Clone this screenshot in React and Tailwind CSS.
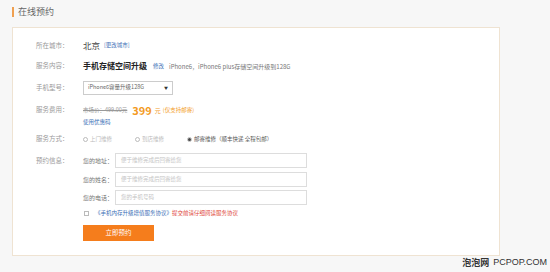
const font = { fontFamily: '"Noto Sans CJK SC", "Liberation Sans", sans-serif' }

const Label = ({ children }) => (
  <div className="w-[47px] shrink-0 text-[6.5px] text-[#9a9a9a]">{children}</div>
)

const Field = ({ label, placeholder }) => (
  <div className="flex items-center h-[15px]">
    <span className="w-[32px] shrink-0 text-[6px] text-[#777]">{label}</span>
    <div className="w-[192px] h-[15px] border border-[#ddd] bg-white flex items-center pl-[5px] text-[5.5px] text-[#c4c4c4]">
      {placeholder}
    </div>
  </div>
)

const Radio = ({ checked, children, className }) => (
  <span className={`flex items-center gap-[2px] ${className}`}>
    <span className="w-[5px] h-[5px] rounded-full border border-[#bbb] flex items-center justify-center bg-white">
      {checked && <span className="w-[3px] h-[3px] rounded-full bg-[#444]" />}
    </span>
    {children}
  </span>
)

export default function App() {
  return (
    <div className="w-[550px] h-[272px] bg-[#f7f7f7] relative overflow-hidden" style={font}>
      <div className="flex items-center h-[27px] pl-[12px] pb-[3px]">
        <span className="w-[2px] h-[10px] bg-[#f0a050]" />
        <span className="ml-[4px] text-[9px] text-[#666]">在线预约</span>
      </div>
      <div className="ml-[12px] w-[488px] h-[229px] border border-[#efe3d2] bg-white pl-[23px] pt-[8px] flex flex-col">
        <div className="flex items-center h-[19px]">
          <Label>所在城市：</Label>
          <span className="text-[8.5px] text-[#444]">北京</span>
          <span className="ml-[4px] text-[5.5px] text-[#3b6fb6]">[更改城市]</span>
        </div>
        <div className="flex items-center h-[22px]">
          <Label>服务内容：</Label>
          <span className="text-[8px] font-bold text-[#222]">手机存储空间升级</span>
          <span className="ml-[6px] text-[5.5px] text-[#3b6fb6]">修改</span>
          <span className="ml-[5px] text-[6px] text-[#777]">iPhone6，iPhone6 plus存储空间升级到128G</span>
        </div>
        <div className="flex items-center h-[21px]">
          <Label>手机型号：</Label>
          <div className="w-[90px] h-[14px] border border-[#ccc] bg-white flex items-center justify-between px-[4px] text-[5.5px] text-[#666]">
            <span>iPhone6容量升级128G</span>
            <span className="text-[4px] text-[#333]">▼</span>
          </div>
        </div>
        <div className="flex h-[30px] pt-[5px]">
          <Label>
            <div className="h-[14px] flex items-center">服务费用：</div>
          </Label>
          <div className="flex flex-col">
            <div className="flex items-center h-[14px]">
              <span className="text-[5.5px] text-[#999] line-through">市场价：499.00元</span>
              <span className="ml-[5px] text-[11px] font-bold text-[#f39a1e] leading-none">399</span>
              <span className="ml-[3px] text-[6px] text-[#f39a1e]">元</span>
              <span className="ml-[2px] text-[5.5px] text-[#f39a1e]">(仅支持邮寄)</span>
            </div>
            <span className="h-[10px] flex items-center text-[5.5px] text-[#3b6fb6]">使用优惠码</span>
          </div>
        </div>
        <div className="flex items-center h-[22px]">
          <Label>服务方式：</Label>
          <div className="flex items-center text-[5.5px] text-[#bbb]">
            <Radio className="w-[52px]">上门维修</Radio>
            <Radio className="w-[52px]">到店维修</Radio>
            <Radio checked className="text-[#555]">邮寄维修（顺丰快递 全程包邮）</Radio>
          </div>
        </div>
        <div className="flex">
          <Label>
            <div className="h-[21px] flex items-center">预约信息：</div>
          </Label>
          <div className="flex flex-col pt-[3px] gap-[3.5px]">
            <Field label="您的地址：" placeholder="便于维修完成后回寄给您" />
            <Field label="您的姓名：" placeholder="便于维修完成后回寄给您" />
            <Field label="您的电话：" placeholder="您的手机号码" />
          </div>
        </div>
        <div className="flex items-center h-[16px] pl-[48px] text-[5.5px]">
          <span className="w-[5px] h-[5px] border border-[#bbb] bg-white mr-[6px]" />
          <span className="text-[#3b6fb6]">《手机内存升级增值服务协议》</span>
          <span className="text-[#e0453a]">提交前请仔细阅读服务协议</span>
        </div>
        <div className="pl-[47px] mt-[4px]">
          <button className="w-[71px] h-[16px] bg-[#f57d1c] text-white text-[6.5px] flex items-center justify-center">
            立即预约
          </button>
        </div>
      </div>
      <div className="absolute right-[3px] bottom-[3px] flex items-center gap-[4px] text-[9px] text-[#333]">
        <span className="font-bold">泡泡网</span>
        <span style={{ fontFamily: '"Liberation Sans", sans-serif' }}>PCPOP.COM</span>
      </div>
    </div>
  )
}
